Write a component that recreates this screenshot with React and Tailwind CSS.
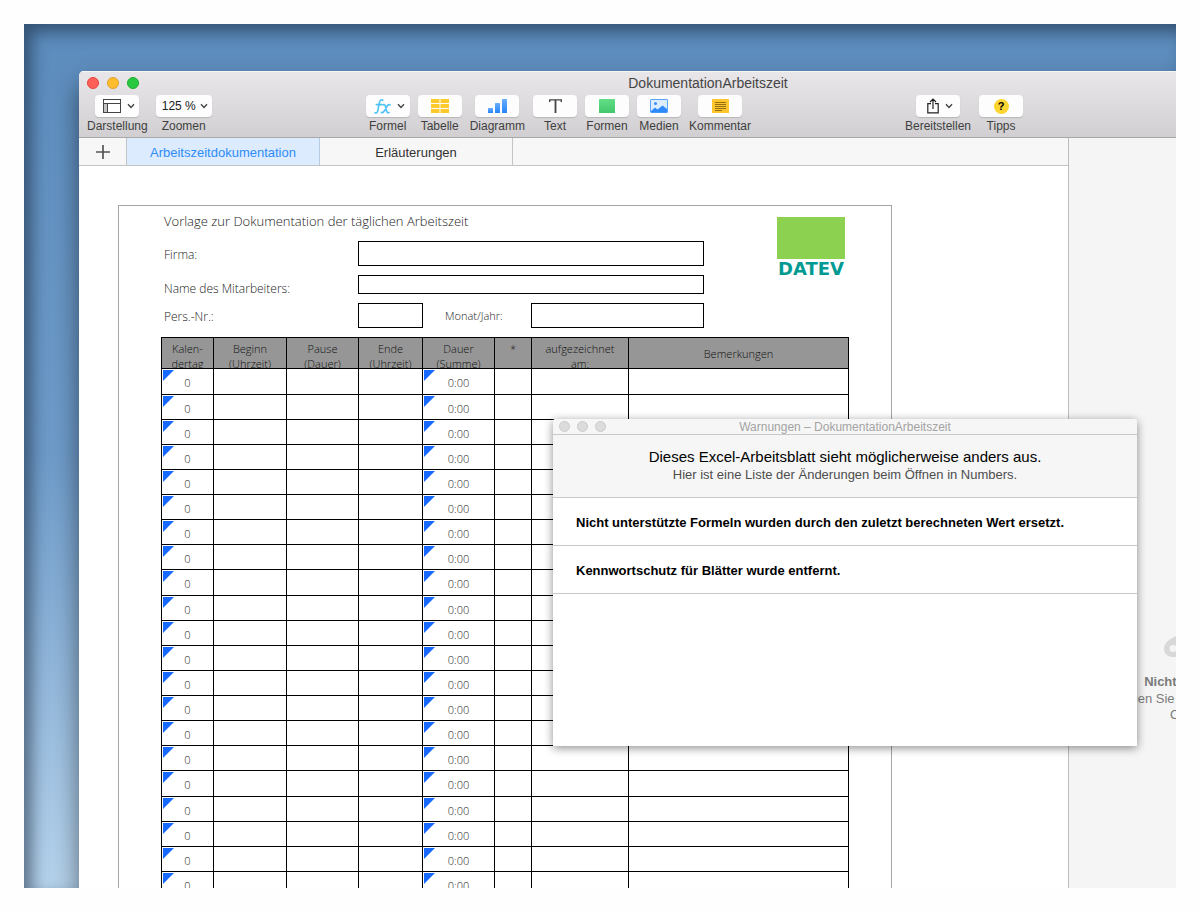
import React from "react";

const ROWS = Array.from({ length: 21 }, (_, i) => i);

const COLUMNS = [
  { lines: ["Kalen-", "dertag"], width: "w-[52px]" },
  { lines: ["Beginn", "(Uhrzeit)"], width: "w-[73px]" },
  { lines: ["Pause", "(Dauer)"], width: "w-[72px]" },
  { lines: ["Ende", "(Uhrzeit)"], width: "w-[64px]" },
  { lines: ["Dauer", "(Summe)"], width: "w-[72px]" },
  { lines: ["*"], width: "w-[37px]" },
  { lines: ["aufgezeichnet", "am:"], width: "w-[97px]" },
  { lines: ["Bemerkungen"], width: "w-[220px]", middle: true },
];

function Chevron() {
  return (
    <svg viewBox="0 0 8 6" className="h-1.5 w-2 shrink-0" fill="none" stroke="#444" strokeWidth="1.4" aria-hidden="true">
      <path d="M1 1.2 4 4.4 7 1.2" />
    </svg>
  );
}

function LayoutIcon() {
  return (
    <svg viewBox="0 0 18 14" className="h-3.5 w-[18px]" aria-hidden="true">
      <rect x="0.5" y="0.5" width="17" height="13" fill="#fff" stroke="#444" />
      <rect x="1" y="4.5" width="3.5" height="8.5" fill="#c4c4c4" />
      <path d="M0.5 4.5h17M4.5 4.5v9" stroke="#444" fill="none" />
    </svg>
  );
}

function FormulaIcon() {
  return (
    <svg viewBox="0 0 17 15" className="h-[15px] w-[17px]" fill="none" stroke="#4cc3f5" strokeWidth="1.6" strokeLinecap="round" aria-hidden="true">
      <path d="M8.8 1.2C6.9 0.4 6 1.2 5.6 2.9L3.8 11.6C3.4 13.6 2.5 14.4 1 13.8M2.3 5.6h5.6" />
      <path d="M9 5.8c1.4-.6 2 .2 2.400 1.600l1.200 4.500c.4 1.600 1.200 2.200 2.500 1.600M16 5.800c-1.300-.6-2.100.1-2.900 1.200L10.500 11.800c-.9 1.400-1.700 2.200-3 1.700" />
    </svg>
  );
}

function TableIcon() {
  return (
    <svg viewBox="0 0 18 14" className="h-3.5 w-[18px]" fill="#fdca2e" aria-hidden="true">
      <path d="M0 0h8.5v4H0zM9.5 0H18v4H9.5zM0 5h8.5v4H0zM9.5 5H18v4H9.5zM0 10h8.5v4H0zM9.5 10H18v4H9.5z" />
    </svg>
  );
}

function ChartIcon() {
  return (
    <svg viewBox="0 0 19 14" className="h-3.5 w-[19px]" aria-hidden="true">
      <defs>
        <linearGradient id="chart" x1="0" y1="0" x2="0" y2="1">
          <stop offset="0" stopColor="#6aaefc" />
          <stop offset="1" stopColor="#2484fb" />
        </linearGradient>
      </defs>
      <rect x="0" y="9" width="5" height="5" rx="0.5" fill="url(#chart)" />
      <rect x="7" y="4" width="5" height="10" rx="0.5" fill="url(#chart)" />
      <rect x="14" y="0" width="5" height="14" rx="0.5" fill="url(#chart)" />
    </svg>
  );
}

function TextIcon() {
  return (
    <svg viewBox="0 0 13 14" className="h-3.5 w-[13px]" fill="none" stroke="#444" aria-hidden="true">
      <path d="M0.7 3V0.9h11.6V3" strokeWidth="1.4" />
      <path d="M6.5 1v13" strokeWidth="1.8" />
    </svg>
  );
}

function ShapeIcon() {
  return (
    <svg viewBox="0 0 16 14" className="h-3.5 w-4" aria-hidden="true">
      <defs>
        <linearGradient id="shape" x1="0" y1="0" x2="0" y2="1">
          <stop offset="0" stopColor="#62de86" />
          <stop offset="1" stopColor="#43c76c" />
        </linearGradient>
      </defs>
      <rect width="16" height="14" rx="0.5" fill="url(#shape)" />
    </svg>
  );
}

function MediaIcon() {
  return (
    <svg viewBox="0 0 18 14" className="h-3.5 w-[18px]" aria-hidden="true">
      <rect x="0.5" y="0.5" width="17" height="13" rx="0.5" fill="#dcedff" stroke="#5ba4fb" />
      <circle cx="5.5" cy="4.5" r="1.5" fill="#3a8ffb" />
      <path d="M1 12 5 8.5 7.5 10.5 12.5 6.5 17 10V13.5H1z" fill="#2f8afb" />
    </svg>
  );
}

function CommentIcon() {
  return (
    <svg viewBox="0 0 17 14" className="h-3.5 w-[17px]" aria-hidden="true">
      <rect width="17" height="14" rx="0.5" fill="#fdc62f" />
      <path d="M3 3.500h11M3 5.500h11M3 7.500h11M3 9.500h11M3 11.500h7" stroke="#8a6310" strokeWidth="0.9" />
    </svg>
  );
}

function ShareIcon() {
  return (
    <svg viewBox="0 0 12 16" className="h-4 w-3" fill="none" stroke="#222" strokeWidth="1.2" aria-hidden="true">
      <path d="M4 5.600H0.800v9.200h10.400V5.600H8M6 11V1.200M3 4 6 1 9 4" />
    </svg>
  );
}

function TipIcon() {
  return (
    <span aria-hidden="true" className="flex size-[15px] items-center justify-center rounded-full bg-[#fdd531] text-[11px] leading-none font-bold text-black">
      ?
    </span>
  );
}

function ToolButton({ label, icon, menu }) {
  return (
    <button type="button" className="flex min-w-11 flex-col items-center">
      <span className={"flex h-[22px] w-11 items-center justify-center rounded bg-[#fdfdfd] shadow-[0_1px_1px_rgba(0,0,0,0.15)] " + (menu ? "gap-1.5 pl-1" : "")}>
        {icon}
        {menu && <Chevron />}
      </span>
      <span className="text-xs leading-[18px] text-[#3f3f3f]">{label}</span>
    </button>
  );
}

function WindowToolbar() {
  return (
    <header className="border-b border-[#a9a7a9] bg-linear-to-b from-[#e9e7e9] to-[#d1cfd1] shadow-[inset_0_1px_0_#f6f5f6]">
      <div className="grid h-6 grid-cols-[1fr_auto_1fr] items-center px-2">
        <div className="flex gap-2">
          <button type="button" aria-label="Schließen" className="size-3 rounded-full border border-[#e2463f] bg-[#ff5f57]" />
          <button type="button" aria-label="Minimieren" className="size-3 rounded-full border border-[#e0a02c] bg-[#ffbd2e]" />
          <button type="button" aria-label="Vergrößern" className="size-3 rounded-full border border-[#1dad2b] bg-[#28c940]" />
        </div>
        <h1 className="text-sm text-[#454545]">DokumentationArbeitszeit</h1>
      </div>
      <div className="flex h-[42px] items-start justify-between px-2">
        <div className="flex gap-2">
          <ToolButton label="Darstellung" icon={<LayoutIcon />} menu />
          <div className="flex w-14 flex-col items-center">
            <div className="relative flex h-[22px] w-full items-center rounded bg-[#fdfdfd] shadow-[0_1px_1px_rgba(0,0,0,0.15)]">
              <select id="zoom" defaultValue="125" className="w-full appearance-none bg-transparent pl-1.5 text-xs text-[#222] outline-none">
                <option value="100">100 %</option>
                <option value="125">125 %</option>
                <option value="150">150 %</option>
              </select>
              <span className="pointer-events-none absolute right-1 flex">
                <Chevron />
              </span>
            </div>
            <label htmlFor="zoom" className="text-xs leading-[18px] text-[#3f3f3f]">Zoomen</label>
          </div>
        </div>
        <div className="flex gap-2">
          <ToolButton label="Formel" icon={<FormulaIcon />} menu />
          <ToolButton label="Tabelle" icon={<TableIcon />} />
          <ToolButton label="Diagramm" icon={<ChartIcon />} />
          <ToolButton label="Text" icon={<TextIcon />} />
          <ToolButton label="Formen" icon={<ShapeIcon />} />
          <ToolButton label="Medien" icon={<MediaIcon />} />
          <ToolButton label="Kommentar" icon={<CommentIcon />} />
        </div>
        <div className="flex gap-2">
          <ToolButton label="Bereitstellen" icon={<ShareIcon />} menu />
          <ToolButton label="Tipps" icon={<TipIcon />} />
        </div>
        <div className="w-[152px]" />
      </div>
    </header>
  );
}

function SheetTabs() {
  return (
    <nav className="flex h-7 border-b border-[#c4c4c4] bg-[#f7f7f7] text-[13px]">
      <button type="button" aria-label="Blatt hinzufügen" className="flex w-12 items-center justify-center border-r border-[#c4c4c4]">
        <svg viewBox="0 0 14 14" className="size-3.5" stroke="#555" strokeWidth="1.7" aria-hidden="true">
          <path d="M0 7h14M7 0v14" />
        </svg>
      </button>
      <button type="button" className="w-[193px] border-r border-[#b5cbe2] bg-[#dcebfe] pt-0.5 text-[#2f8bf7]">Arbeitszeitdokumentation</button>
      <button type="button" className="w-[193px] border-r border-[#c4c4c4] pt-0.5 text-[#333]">Erläuterungen</button>
    </nav>
  );
}

function DatevLogo() {
  return (
    <div className="mt-[11px] w-[68px]">
      <div className="h-[42px] bg-[#8cd250]" />
      <div className="flex h-5 items-center justify-center font-['DejaVu_Sans',sans-serif] text-lg leading-none font-bold text-[#009a93]">DATEV</div>
    </div>
  );
}

function EmployeeForm() {
  const label = "w-[197px] shrink-0 pl-[3px] text-xs leading-4";
  const field = "border border-black bg-white px-1 text-xs outline-none";
  return (
    <form className="flex w-[543px] flex-col gap-[9px]">
      <h2 className="h-[26px] pt-[5px] pl-[3px] text-[13px] leading-5">Vorlage zur Dokumentation der täglichen Arbeitszeit</h2>
      <div className="flex items-center">
        <label htmlFor="firma" className={label + " pt-0.5"}>Firma:</label>
        <input id="firma" className={"h-[25px] min-w-0 flex-1 " + field} />
      </div>
      <div className="flex h-[19px] items-start">
        <label htmlFor="name" className={label + " pt-1.5"}>Name des Mitarbeiters:</label>
        <input id="name" className={"h-[19px] min-w-0 flex-1 " + field} />
      </div>
      <div className="flex items-center">
        <label htmlFor="nr" className={label + " pt-0.5"}>Pers.-Nr.:</label>
        <input id="nr" className={"h-[25px] w-[65px] " + field} />
        <label htmlFor="monat" className="w-[108px] pl-[22px] text-[11px] leading-4">Monat/Jahr:</label>
        <input id="monat" className={"h-[25px] min-w-0 flex-1 " + field} />
      </div>
    </form>
  );
}

function Marked({ children }) {
  return (
    <div className="relative flex h-full items-center justify-center pt-[3px]">
      <svg viewBox="0 0 11 11" className="absolute top-px left-px size-[11px]" aria-hidden="true">
        <path d="M0 0h11L0 11z" fill="#1769ff" />
      </svg>
      {children}
    </div>
  );
}

function TimeTable() {
  return (
    <table className="w-[688px] table-fixed border-separate border-spacing-0 border-t border-l border-black text-[11px]">
      <thead>
        <tr className="h-[31px]">
          {COLUMNS.map((c) => (
            <th key={c.lines[0]} scope="col" className={"border-r border-b border-black bg-[#969696] p-0 font-light text-[#111] " + c.width}>
              <div className={"flex h-[30px] flex-col items-center overflow-hidden leading-[15px] " + (c.middle ? "justify-center" : "pt-[3px]")}>
                {c.lines.map((l) => (
                  <span key={l} className="shrink-0">{l}</span>
                ))}
              </div>
            </th>
          ))}
        </tr>
      </thead>
      <tbody>
        {ROWS.map((r) => (
          <tr key={r} className={r % 8 === 0 ? "h-[26px]" : "h-[25px]"}>
            {COLUMNS.map((c, i) => (
              <td key={c.lines[0]} className="h-[inherit] border-r border-b border-black p-0 leading-4">
                {i === 0 && <Marked>0</Marked>}
                {i === 4 && <Marked>0:00</Marked>}
              </td>
            ))}
          </tr>
        ))}
      </tbody>
    </table>
  );
}

function FormatSidebar() {
  return (
    <aside className="flex w-[269px] shrink-0 flex-col items-center border-l border-[#bdbdbd] bg-[#f5f5f5] pt-[494px] text-[#7b7b7b]">
      <svg viewBox="0 0 80 30" className="h-[30px] w-20" aria-hidden="true">
        <path fillRule="evenodd" fill="#d8d8d8" d="M17 2C9 6 1 9 1 17c0 5 4 8 9 8 7 0 12-3 18-7l48-2V7L28 5zM10 13a3.500 3.500 0 1 1 0 7a3.500 3.500 0 0 1 0-7z" />
      </svg>
      <p className="mt-2.5 text-[13px] leading-[19px] font-bold whitespace-nowrap">Nichts ausgewählt.</p>
      <p className="w-[220px] text-center text-[13px] leading-4">
        Wählen Sie eine Tabelle oder ein
        <br />
        Objekt aus.
      </p>
    </aside>
  );
}

function WarningsDialog() {
  return (
    <section role="dialog" aria-labelledby="warn-title" className="absolute top-[395px] left-[529px] flex h-[327px] w-[584px] flex-col rounded-t-[3px] bg-white shadow-[0_2px_10px_rgba(0,0,0,0.45)]">
      <div className="relative flex h-4 shrink-0 items-center justify-center rounded-t-[3px] border-b border-[#c9c9c9] bg-[#f6f6f6]">
        <div className="absolute left-1.5 flex gap-[7px]">
          <button type="button" aria-label="Schließen" className="size-[11px] rounded-full border border-[#cbcbcb] bg-[#dcdcdc]" />
          <button type="button" aria-label="Minimieren" className="size-[11px] rounded-full border border-[#cbcbcb] bg-[#dcdcdc]" />
          <button type="button" aria-label="Vergrößern" className="size-[11px] rounded-full border border-[#cbcbcb] bg-[#dcdcdc]" />
        </div>
        <h2 id="warn-title" className="text-xs leading-4 text-[#a3a3a3]">Warnungen – DokumentationArbeitszeit</h2>
      </div>
      <div className="h-[63px] shrink-0 border-b border-[#c9c9c9] bg-[#f6f6f6] pt-3 text-center">
        <p className="text-[15px] leading-5 text-black">Dieses Excel-Arbeitsblatt sieht möglicherweise anders aus.</p>
        <p className="text-[13px] leading-4 text-[#4d4d4d]">Hier ist eine Liste der Änderungen beim Öffnen in Numbers.</p>
      </div>
      <ul className="text-[13px] font-bold text-black">
        <li className="flex h-12 items-center border-b border-[#c9c9c9] pt-0.5 pl-[23px]">Nicht unterstützte Formeln wurden durch den zuletzt berechneten Wert ersetzt.</li>
        <li className="flex h-12 items-center border-b border-[#c9c9c9] pt-0.5 pl-[23px]">Kennwortschutz für Blätter wurde entfernt.</li>
      </ul>
    </section>
  );
}

export default function App() {
  return (
    <div className="h-screen bg-[#fefefe] p-6 font-['Liberation_Sans',Arial,sans-serif]">
      <main className="relative flex h-full flex-col overflow-hidden bg-linear-to-b from-[#5c8cbd] via-[#6e9bc9] to-[#b6d3ec] pt-[47px] pl-[55px] shadow-[inset_8px_8px_16px_rgba(20,35,55,0.55)]">
        <div className="-mr-[161px] flex min-h-0 flex-1 flex-col rounded-t-[5px] bg-white shadow-[0_14px_26px_rgba(0,0,0,0.5)]">
          <div className="overflow-hidden rounded-t-[5px]">
            <WindowToolbar />
          </div>
          <div className="flex min-h-0 flex-1">
            <div className="flex min-w-0 flex-1 flex-col">
              <SheetTabs />
              <div className="flex min-h-0 flex-1 overflow-hidden pt-[39px] pl-[39px]">
                <article className="w-[774px] border border-b-0 border-[#a6a6a6] pl-[42px] font-['Open_Sans','Noto_Sans',sans-serif] font-light text-[#222]">
                  <div className="mb-[9px] flex gap-[73px]">
                    <EmployeeForm />
                    <DatevLogo />
                  </div>
                  <TimeTable />
                </article>
              </div>
            </div>
            <FormatSidebar />
          </div>
        </div>
        <WarningsDialog />
      </main>
    </div>
  );
}
